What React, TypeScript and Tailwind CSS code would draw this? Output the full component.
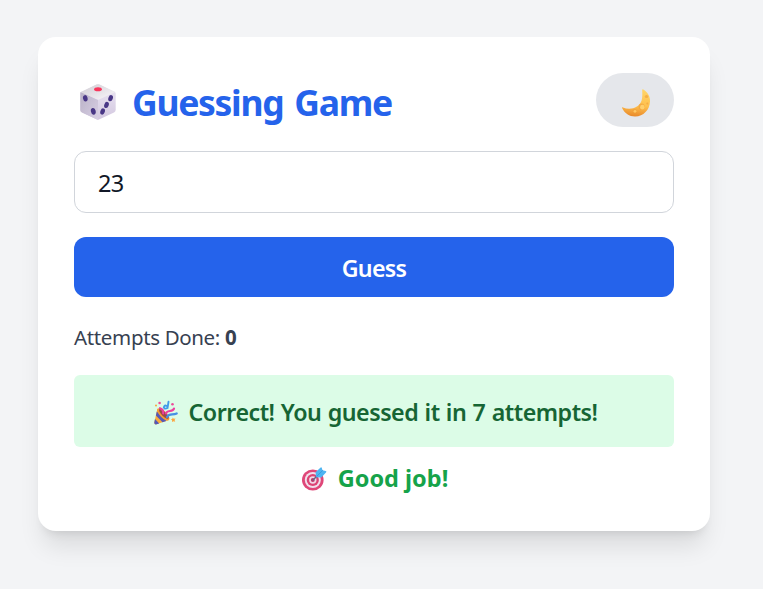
import { useState } from "react";

function Dice() {
  return (
    <svg width="36" height="38" viewBox="0 0 36 38" className="shrink-0" aria-hidden="true">
      <defs>
        <linearGradient id="diceTop" x1="0" y1="0" x2="1" y2="1">
          <stop offset="0" stopColor="#d0ccd2" />
          <stop offset="1" stopColor="#faf8fc" />
        </linearGradient>
        <linearGradient id="diceLeft" x1="0" y1="0" x2="1" y2="1">
          <stop offset="0" stopColor="#b9b1c6" />
          <stop offset="1" stopColor="#d8cfe4" />
        </linearGradient>
        <linearGradient id="diceRight" x1="0" y1="0" x2="0" y2="1">
          <stop offset="0" stopColor="#ece7f3" />
          <stop offset="1" stopColor="#d3c8e0" />
        </linearGradient>
      </defs>
      <path d="M2 8.500Q.3 9 .3 10.500V27Q.5 28.500 2 29.500L17 36.500Q18 37 19 36.500L34 29.500Q35.500 28.500 35.700 27V10.500Q35.700 9 34 8.500L19.500 1.500Q18 1 16.500 1.500Z" fill="url(#diceRight)" />
      <path d="M.7 9L18 16.500V36.800Q17.500 36.800 17 36.500L2 29.500Q.3 28.500 .3 27V10.500Q.3 9.500 .7 9Z" fill="url(#diceLeft)" />
      <path d="M.7 9Q1.200 8.700 2 8.500L16.500 1.500Q18 1 19.500 1.500L34 8.500Q34.800 8.700 35.300 9L19.500 16.300Q18 17 16.500 16.300Z" fill="url(#diceTop)" />
      <ellipse cx="18" cy="6.300" rx="3.900" ry="2" fill="#f8365c" />
      <g fill="#493786">
        <ellipse cx="5.300" cy="15.300" rx="2.300" ry="3.200" transform="rotate(-12 5.300 15.300)" />
        <ellipse cx="13.300" cy="28.300" rx="2.400" ry="3.400" transform="rotate(-12 13.300 28.300)" />
        <ellipse cx="30.600" cy="15.200" rx="2.200" ry="3.200" transform="rotate(20 30.600 15.200)" />
        <ellipse cx="26.500" cy="21.900" rx="2.200" ry="3.200" transform="rotate(20 26.500 21.900)" />
        <ellipse cx="22.600" cy="28.500" rx="2.200" ry="3.200" transform="rotate(20 22.600 28.500)" />
      </g>
    </svg>
  );
}

function Moon() {
  return (
    <svg width="30" height="30" viewBox="0 0 30 30" className="ml-px" aria-hidden="true">
      <defs>
        <linearGradient id="moonFill" x1="0.6" y1="0" x2="0.5" y2="1">
          <stop offset="0" stopColor="#ffd568" />
          <stop offset="0.6" stopColor="#fec04e" />
          <stop offset="1" stopColor="#e98a2b" />
        </linearGradient>
      </defs>
      <path d="M22.300 1.500C26.500 4 29.300 8.200 29 13.500C28.600 22 22.500 28.300 14.200 28.500C8.500 28.600 3.700 25.500 1.200 20.300C.8 19.300 1.300 19 2 19.400C9 22.500 18.500 19.800 20.600 12.500C21.600 9 21.300 5.500 21.200 2.200C21.200 1.300 21.600 1.100 22.300 1.500Z" fill="url(#moonFill)" />
      <g fill="#efa03c" fillOpacity="0.65">
        <ellipse cx="20.500" cy="18.700" rx="3" ry="3.100" />
        <circle cx="13.500" cy="23" r="2" />
        <ellipse cx="25.500" cy="8.500" rx="1.700" ry="1.500" />
        <circle cx="26.300" cy="15.500" r="1" />
      </g>
      <ellipse cx="21.300" cy="19.200" rx="2.200" ry="2.400" fill="#ffcf6b" />
      <ellipse cx="14" cy="23.300" rx="1.400" ry="1.400" fill="#ffc763" />
    </svg>
  );
}

function Party() {
  return (
    <svg width="24" height="26" viewBox="0 0 24 26" className="shrink-0" aria-hidden="true">
      <path d="M3.500 8.500L15 20L2.500 24.300C1 24.700 0 23.700 .3 22.200Z" fill="#fbac3b" />
      <path d="M2.800 11.500L1.900 15.500L8.500 22.300L12.300 21ZM1 19L.3 22.500Q.3 24.500 2 24.400L5.200 23.400Z" fill="#5559b6" />
      <ellipse cx="9.300" cy="14.300" rx="8" ry="3.300" transform="rotate(45 9.300 14.300)" fill="#f39a38" />
      <ellipse cx="9.800" cy="13.900" rx="6.500" ry="2.100" transform="rotate(45 9.800 13.900)" fill="#9b4a4a" />
      <g fill="none" strokeLinecap="round" strokeWidth="2.200">
        <path d="M6 8.200C8.800 9 9.500 11 9.200 13.300" stroke="#ec3f9f" />
        <path d="M12 13.500C12.500 9.500 19 12.500 20 8.500" stroke="#ec3f9f" />
        <path d="M13 17C15.500 13 18.500 15.500 22.700 13.500" stroke="#458fe4" />
        <path d="M14.500 1.800L13.500 8C10.500 9.500 9.200 7.600 10.200 6.300C11.200 5 13 5.500 13.700 7" stroke="#3f9bea" strokeWidth="1.900" />
      </g>
      <path d="M18.500 17.500l1.300 1.300 1.700-.3-.9 1.600.6 1.700-1.700-.5-1.500.8.100-1.800-1.200-1.200 1.500-.2Z" fill="#fba640" />
      <circle cx="5.600" cy="3" r="1.300" fill="#ed4c99" />
      <circle cx="2" cy="5.500" r="1" fill="#f9a33b" />
      <circle cx="18.500" cy="4.200" r="1.300" fill="#ed4c99" />
    </svg>
  );
}

function Target() {
  return (
    <svg width="25" height="25" viewBox="0 0 25 25" className="-mt-0.5 shrink-0" aria-hidden="true">
      <ellipse cx="10.800" cy="14" rx="10.800" ry="10.500" fill="#df4778" />
      <circle cx="10.800" cy="14" r="8" fill="#f2dfec" />
      <circle cx="10.800" cy="14" r="6.100" fill="#dc4474" />
      <circle cx="10.800" cy="14" r="3.700" fill="#f0d8e6" />
      <circle cx="10.800" cy="14" r="2" fill="#c93568" />
      <path d="M11 14L16 9" stroke="#5f6688" strokeWidth="1.500" strokeLinecap="round" />
      <path d="M14 11.200L13.600 6.300L18.300 1.800Q19.500.8 19.800 2L20.500 4.300L23.700 5Q25 5.400 24 6.500L19.300 11.500Z" fill="#4eb5f2" />
      <path d="M14.500 10.500L20.800 4.300" stroke="#3f9ade" strokeWidth="1" />
    </svg>
  );
}

export default function App() {
  const [guess, setGuess] = useState("23");
  return (
    <main className="min-h-screen bg-gray-100 pt-[37px] pl-[38px] font-['Noto_Sans','Open_Sans',sans-serif]">
      <section className="h-[494px] w-[672px] rounded-[18px] bg-white p-9 shadow-xl">
        <header className="mb-6 flex h-[54px] items-center justify-between">
          <h1 className="flex items-center gap-4 pl-1.5 pt-1 text-[35.5px] leading-[48px] font-bold whitespace-nowrap text-[#2563eb]">
            <Dice />
            <span className="tracking-[-1.3px] [word-spacing:3px]">Guessing Game</span>
          </h1>
          <button className="flex h-[54px] w-[78px] items-center justify-center rounded-full bg-[#e5e7eb] pt-1.5" aria-label="Dark mode">
            <Moon />
          </button>
        </header>
        <input
          className="block h-[62px] w-full rounded-xl border border-[#d1d5db] px-[23px] pt-0.5 text-[23.5px] tracking-[-0.6px] text-[#111827] outline-none"
          value={guess}
          onChange={(e) => setGuess(e.target.value)}
        />
        <button className="mt-6 flex h-[60px] w-full items-center justify-center rounded-xl bg-[#2563eb] pt-[3px] text-[23.25px] font-semibold text-white">
          <span className="tracking-[-0.7px]">Guess</span>
        </button>
        <p className="mt-6 h-[30px] text-[20.5px] leading-[33px] tracking-[-0.35px] whitespace-nowrap text-[#374151]">
          Attempts Done: <span className="font-bold">0</span>
        </p>
        <div className="mt-6 flex h-[72px] items-center justify-center gap-[11px] rounded-md bg-[#dcfce7] pt-[3px] pl-[3px] text-[23.25px] font-semibold whitespace-nowrap text-[#166534]">
          <Party />
          <span className="tracking-[-0.5px] [word-spacing:0.75px]">Correct! You guessed it in 7 attempts!</span>
        </div>
        <p className="mt-3 flex h-9 items-center justify-center gap-[11px] pt-1 pl-0.5 text-[23.5px] font-bold whitespace-nowrap text-[#16a34a]">
          <Target />
          <span>Good job!</span>
        </p>
      </section>
    </main>
  );
}
